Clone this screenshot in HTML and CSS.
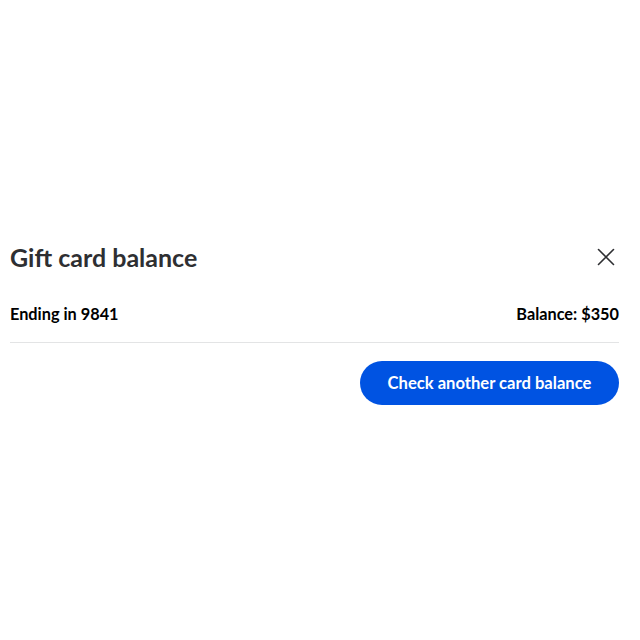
FILE: index.html
```html
<!DOCTYPE html>
<html lang="en">
<head>
<meta charset="utf-8">
<title>Gift card balance</title>
<link rel="stylesheet" href="styles.css">
</head>
<body>
<div class="modal">
  <div class="header">
    <h2 class="title">Gift card balance</h2>
    <button class="close" aria-label="Close">
      <svg width="18" height="18" viewBox="0 0 18 18" fill="none" stroke="#2e2f32" stroke-width="1.6" stroke-linecap="round">
        <path d="M1.5 1.5 L16.5 16.5 M16.5 1.5 L1.5 16.5"/>
      </svg>
    </button>
  </div>
  <div class="row">
    <span>Ending in 9841</span>
    <span>Balance: $350</span>
  </div>
  <div class="actions">
    <button class="primary">Check another card balance</button>
  </div>
</div>
</body>
</html>
```
FILE: styles.css
```css
html, body {
  margin: 0;
  padding: 0;
  background: #fff;
}
body {
  font-family: Lato, "Open Sans", "Liberation Sans", sans-serif;
  color: #2e2f32;
}
.modal {
  width: 609px;
  margin-left: 10px;
  padding-top: 240px;
}
.header {
  display: flex;
  justify-content: space-between;
  align-items: center;
  height: 34px;
}
.title {
  margin: 0;
  font-size: 25px;
  font-weight: 700;
  line-height: 34px;
  color: #2e2f32;
}
.close {
  border: 0;
  background: none;
  padding: 0;
  margin-right: 4px;
  width: 18px;
  height: 18px;
  display: flex;
}
.row {
  display: flex;
  justify-content: space-between;
  margin-top: 28px;
  padding-bottom: 16px;
  border-bottom: 1px solid #e3e4e5;
  font-size: 16.3px;
  font-weight: 700;
  line-height: 24px;
  color: #000;
}
.actions {
  display: flex;
  justify-content: flex-end;
  padding-top: 18px;
}
.primary {
  font-family: inherit;
  font-size: 16.6px;
  font-weight: 700;
  color: #fff;
  background: #0053e2;
  border: 0;
  border-radius: 22px;
  height: 44px;
  width: 259px;
  padding: 0 12px;
}
```
